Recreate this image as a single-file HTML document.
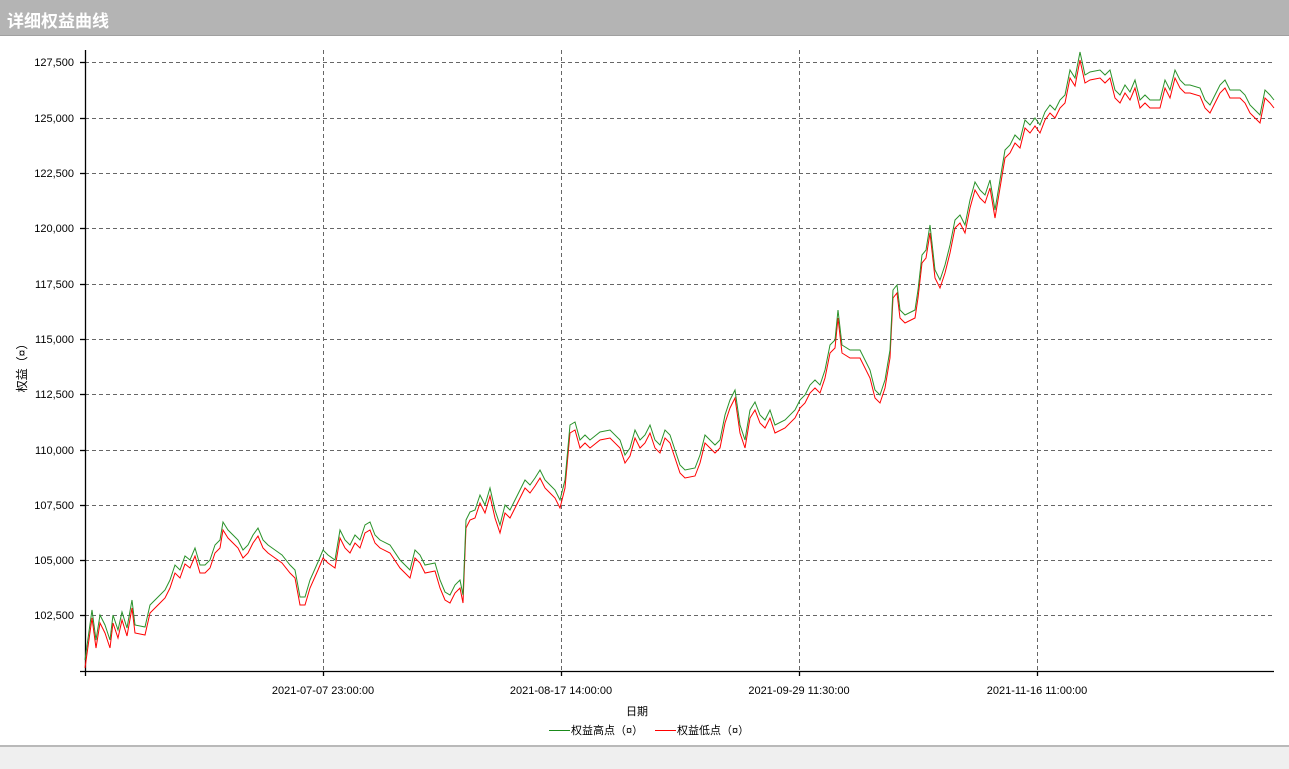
<!DOCTYPE html>
<html><head><meta charset="utf-8"><style>
html,body{margin:0;padding:0;width:1289px;height:767px;overflow:hidden;background:#fff;font-family:"Liberation Sans","Noto Sans CJK SC",sans-serif;}
.hdr{position:absolute;left:0;top:0;width:1289px;height:35px;background:#b4b4b4;border-bottom:1px solid #a0a0a0;}
.hdr span{position:absolute;left:7px;top:7px;color:#fff;font-weight:bold;font-size:17px;}
.foot{position:absolute;left:0;top:745px;width:1289px;height:22px;background:#efefef;border-top:2px solid #b9b9b9;}
</style></head><body>
<div class="hdr"><span>详细权益曲线</span></div>
<svg style="position:absolute;left:0;top:36px" width="1289" height="709" viewBox="0 36 1289 709">
<g stroke="#666" stroke-dasharray="4,3" stroke-width="1" fill="none">
<line x1="85" y1="62.5" x2="1274" y2="62.5"/><line x1="85" y1="118.5" x2="1274" y2="118.5"/><line x1="85" y1="173.5" x2="1274" y2="173.5"/><line x1="85" y1="228.5" x2="1274" y2="228.5"/><line x1="85" y1="284.5" x2="1274" y2="284.5"/><line x1="85" y1="339.5" x2="1274" y2="339.5"/><line x1="85" y1="394.5" x2="1274" y2="394.5"/><line x1="85" y1="450.5" x2="1274" y2="450.5"/><line x1="85" y1="505.5" x2="1274" y2="505.5"/><line x1="85" y1="560.5" x2="1274" y2="560.5"/><line x1="85" y1="615.5" x2="1274" y2="615.5"/>
<line x1="323.5" y1="50" x2="323.5" y2="671"/><line x1="561.5" y1="50" x2="561.5" y2="671"/><line x1="799.5" y1="50" x2="799.5" y2="671"/><line x1="1037.5" y1="50" x2="1037.5" y2="671"/>
</g>
<g stroke="#000" stroke-width="1.3">
<line x1="85.5" y1="50" x2="85.5" y2="676"/><line x1="80" y1="671.5" x2="1274" y2="671.5"/>
<line x1="80" y1="62.5" x2="85" y2="62.5"/><line x1="80" y1="118.5" x2="85" y2="118.5"/><line x1="80" y1="173.5" x2="85" y2="173.5"/><line x1="80" y1="228.5" x2="85" y2="228.5"/><line x1="80" y1="284.5" x2="85" y2="284.5"/><line x1="80" y1="339.5" x2="85" y2="339.5"/><line x1="80" y1="394.5" x2="85" y2="394.5"/><line x1="80" y1="450.5" x2="85" y2="450.5"/><line x1="80" y1="505.5" x2="85" y2="505.5"/><line x1="80" y1="560.5" x2="85" y2="560.5"/><line x1="80" y1="615.5" x2="85" y2="615.5"/>
<line x1="323.5" y1="671" x2="323.5" y2="676"/><line x1="561.5" y1="671" x2="561.5" y2="676"/><line x1="799.5" y1="671" x2="799.5" y2="676"/><line x1="1037.5" y1="671" x2="1037.5" y2="676"/>
</g>
<defs><polyline id="c" points="85,660 92,610 96,640 100,615 105,625 110,640 113,615 118,630 122,612 127,628 132,600 135,625 145,627 150,605 155,600 160,595 165,590 170,580 175,565 180,570 185,556 190,560 195,548 200,565 205,565 210,560 215,545 220,540 223,522 228,530 233,535 238,540 243,550 248,545 253,535 258,528 263,540 268,545 275,550 282,555 290,565 295,570 300,597 305,597 310,580 318,562 323,550 328,555 335,560 340,530 345,540 350,545 355,535 360,540 365,525 370,522 375,535 380,540 390,545 400,560 410,570 415,550 420,555 425,565 435,563 440,580 445,592 450,595 455,585 460,580 463,595 466,520 470,512 475,510 480,495 485,505 490,488 495,510 500,525 505,505 510,510 515,500 520,490 525,480 530,485 535,478 540,470 545,480 550,485 555,490 560,500 565,480 570,425 575,422 580,440 585,435 590,440 600,432 610,430 620,440 625,455 630,448 635,430 640,440 645,435 650,425 655,440 660,445 665,430 670,435 675,450 680,465 685,470 695,468 700,455 705,435 710,440 715,445 720,440 725,415 730,400 735,390 740,425 745,440 750,410 755,402 760,415 765,420 770,410 775,425 785,420 795,410 800,400 805,395 810,385 815,380 820,385 825,370 830,345 835,340 838,310 842,345 850,350 860,350 870,370 875,390 880,395 885,380 890,350 893,290 897,285 900,310 905,315 915,310 918,290 922,255 926,250 930,225 935,270 940,280 945,265 950,245 955,220 960,215 965,225 970,200 975,182 980,190 985,195 990,180 995,210 1000,180 1005,150 1010,145 1015,135 1020,140 1025,120 1030,125 1035,118 1040,125 1045,112 1050,105 1055,110 1060,100 1065,95 1070,70 1075,78 1080,52 1085,75 1090,72 1100,70 1105,75 1110,70 1115,90 1120,95 1125,85 1130,92 1135,80 1140,100 1145,95 1150,100 1160,100 1165,80 1170,90 1175,70 1180,80 1185,85 1190,85 1200,88 1205,100 1210,105 1215,95 1220,85 1225,80 1230,90 1240,90 1245,95 1250,105 1255,110 1260,115 1265,90 1270,95 1274,100"/></defs>
<use href="#c" fill="none" stroke="#ff0000" stroke-width="1" transform="translate(0,8)"/>
<use href="#c" fill="none" stroke="#2a922a" stroke-width="1"/>
<g font-size="11" fill="#000" text-anchor="end">
<text x="74" y="66">127,500</text><text x="74" y="122">125,000</text><text x="74" y="177">122,500</text><text x="74" y="232">120,000</text><text x="74" y="288">117,500</text><text x="74" y="343">115,000</text><text x="74" y="398">112,500</text><text x="74" y="454">110,000</text><text x="74" y="509">107,500</text><text x="74" y="564">105,000</text><text x="74" y="619">102,500</text>
</g>
<g font-size="11" fill="#000" text-anchor="middle">
<text x="323" y="694">2021-07-07 23:00:00</text><text x="561" y="694">2021-08-17 14:00:00</text><text x="799" y="694">2021-09-29 11:30:00</text><text x="1037" y="694">2021-11-16 11:00:00</text>
<text x="637" y="715">日期</text>
</g>
<text x="26" y="365" font-size="12" text-anchor="middle" transform="rotate(-90 26 365)">权益（¤）</text>
<g font-size="11" fill="#000">
<line x1="549" y1="730.5" x2="570" y2="730.5" stroke="#1a8a1a"/><text x="571" y="734">权益高点（¤）</text>
<line x1="655" y1="730.5" x2="676" y2="730.5" stroke="#ff0000"/><text x="677" y="734">权益低点（¤）</text>
</g>
</svg>
<div class="foot"></div>
</body></html>
